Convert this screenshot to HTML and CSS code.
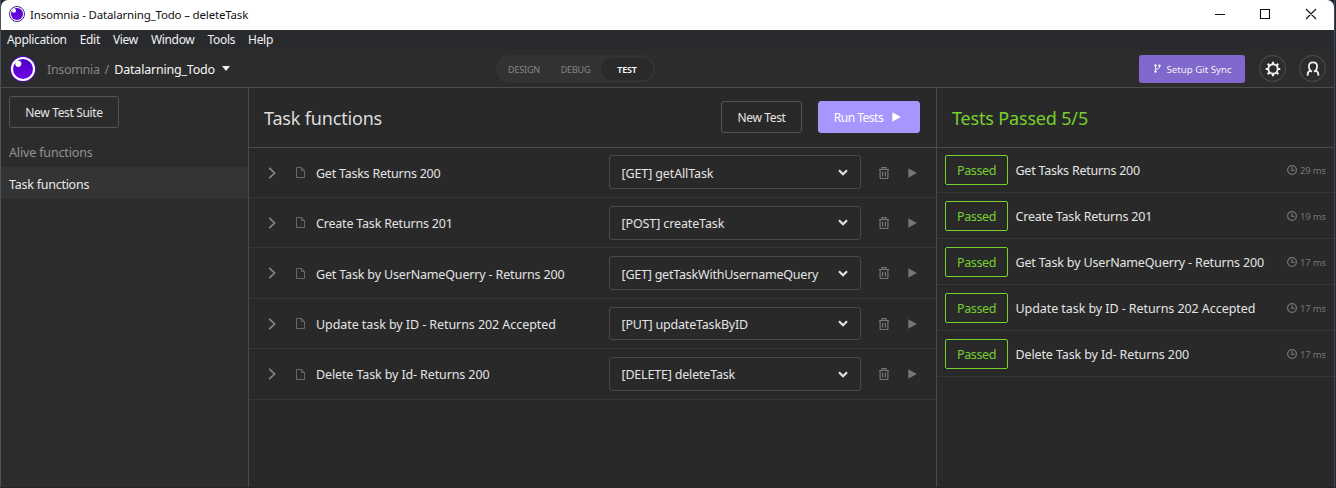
FILE: index.html
```html
<!DOCTYPE html>
<html lang="en">
<head>
<meta charset="utf-8">
<title>Insomnia - Datalarning_Todo – deleteTask</title>
<link rel="stylesheet" href="styles.css">
</head>
<body>
<svg class="defs" width="0" height="0">
  <defs>
    <linearGradient id="orb" x1="0" y1="0" x2="0" y2="1"><stop offset="0" stop-color="#4a00c0"/><stop offset="1" stop-color="#6f05e8"/></linearGradient>
    <symbol id="logo" viewBox="0 0 26 26"><circle cx="13" cy="13" r="13" fill="#5008c4"/><circle cx="13" cy="13" r="12.1" fill="#fff"/><circle cx="13" cy="13" r="10" fill="url(#orb)"/><circle cx="8.3" cy="7.8" r="3.1" fill="#fff"/></symbol>
    <symbol id="logo-small" viewBox="0 0 16 16"><circle cx="8" cy="8" r="7.5" fill="#fff" stroke="#44208f"/><circle cx="8" cy="8" r="6" fill="url(#orb)"/><circle cx="5" cy="4.8" r="2" fill="#fff"/></symbol>
    <symbol id="chev" viewBox="0 0 8 12"><path d="M1.2 .8 6.6 6 1.2 11.2" fill="none" stroke="currentColor" stroke-width="1.7"/></symbol>
    <symbol id="file" viewBox="0 0 9 11"><path d="M.5 .5H5.6L8.5 3.4V10.5H.5ZM5.5 .5V3.5H8.5" fill="none" stroke="currentColor"/></symbol>
    <symbol id="down" viewBox="0 0 10 7"><path d="M1 1.2 5 5.2 9 1.2" fill="none" stroke="currentColor" stroke-width="2.2"/></symbol>
    <symbol id="trash" viewBox="0 0 10 12"><path d="M0 2.5H10M3 2.5V.6H7V2.5M1.1 2.5V10.6Q1.1 11.5 2 11.5H8Q8.9 11.5 8.9 10.6V2.5M3.6 4.8V9.6M6.4 4.8V9.6" fill="none" stroke="currentColor" stroke-width="1.2"/></symbol>
    <symbol id="play" viewBox="0 0 9 10"><path d="M.3 .2V9.8L8.8 5Z" fill="currentColor"/></symbol>
    <symbol id="clock" viewBox="0 0 10 10"><circle cx="5" cy="5" r="4.4" fill="none" stroke="currentColor" stroke-width="1.2"/><path d="M5 2.2V5.3H7.6" fill="none" stroke="currentColor" stroke-width="1.2"/></symbol>
  </defs>
</svg>
<div class="window">
  <div class="titlebar">
    <svg class="app-icon"><use href="#logo-small"/></svg>
    <span class="title">Insomnia - Datalarning_Todo – deleteTask</span>
    <svg class="controls" viewBox="0 0 104 12"><path d="M0 6.5H10M45.5 1.5H54.5V10.5H45.5ZM91 1 101 11M101 1 91 11" fill="none" stroke="#111" stroke-width="1.1"/></svg>
  </div>
  <nav class="menubar"><span>Application</span><span>Edit</span><span>View</span><span>Window</span><span>Tools</span><span>Help</span></nav>
  <header class="header">
    <div class="crumbs">
      <svg class="logo"><use href="#logo"/></svg>
      <span class="org">Insomnia</span><span class="slash">/</span><span class="project">Datalarning_Todo</span>
      <svg class="caret" viewBox="0 0 8 5"><path d="M0 0H8L4 5Z" fill="#eee"/></svg>
    </div>
    <div class="tabs"><span class="tab design">DESIGN</span><span class="tab debug">DEBUG</span><span class="tab active">TEST</span></div>
    <div class="actions">
      <button class="sync"><svg class="branch" viewBox="0 0 7 9"><path d="M1.5 1V8M5.5 1V3Q5.5 5 1.5 5.4" fill="none" stroke="currentColor"/><circle cx="1.5" cy="1.4" r="1.2" fill="currentColor"/><circle cx="5.5" cy="1.6" r="1.2" fill="currentColor"/><circle cx="1.5" cy="7.6" r="1.2" fill="currentColor"/></svg><span>Setup Git Sync</span></button>
      <span class="round"><svg width="16" height="16" viewBox="0 0 16 16"><circle cx="8" cy="8" r="4.7" fill="none" stroke="#eee" stroke-width="1.9"/><path d="M8 .7V3M8 13V15.3M.7 8H3M13 8H15.3M2.7 2.7 4.4 4.4M11.6 11.6 13.3 13.3M2.7 13.3 4.4 11.6M11.6 4.4 13.3 2.7" stroke="#eee" stroke-width="2.1"/></svg></span>
      <span class="round"><svg width="14" height="16" viewBox="0 0 14 16"><path d="M1.7 14.8V13Q1.7 10.4 4.4 9.8Q2.9 8 2.9 5.3 2.9 1.3 7 1.3T11.1 5.3Q11.1 8 9.6 9.8Q12.3 10.4 12.3 13V14.8M4.2 9.6 6 10.6M9.8 9.6 8 10.6" fill="none" stroke="#eee" stroke-width="1.8"/></svg></span>
    </div>
  </header>
  <div class="body">
    <aside class="sidebar">
      <button class="btn suite"><span>New Test Suite</span></button>
      <div class="item"><span>Alive functions</span></div>
      <div class="item selected"><span>Task functions</span></div>
    </aside>
    <main class="main">
      <div class="pane-head"><h1 class="h-task">Task functions</h1><button class="btn new-test"><span>New Test</span></button><button class="btn run"><span>Run Tests</span><svg class="play"><use href="#play"/></svg></button></div>
      <div class="tests">
        <div class="test"><svg class="chev"><use href="#chev"/></svg><svg class="file"><use href="#file"/></svg><span class="name n1">Get Tasks Returns 200</span><div class="select first"><span class="s1">[GET] getAllTask</span><svg class="down"><use href="#down"/></svg></div><svg class="trash"><use href="#trash"/></svg><svg class="play"><use href="#play"/></svg></div>
        <div class="test"><svg class="chev"><use href="#chev"/></svg><svg class="file"><use href="#file"/></svg><span class="name n2">Create Task Returns 201</span><div class="select"><span class="s2">[POST] createTask</span><svg class="down"><use href="#down"/></svg></div><svg class="trash"><use href="#trash"/></svg><svg class="play"><use href="#play"/></svg></div>
        <div class="test"><svg class="chev"><use href="#chev"/></svg><svg class="file"><use href="#file"/></svg><span class="name n3">Get Task by UserNameQuerry - Returns 200</span><div class="select"><span class="s3">[GET] getTaskWithUsernameQuery</span><svg class="down"><use href="#down"/></svg></div><svg class="trash"><use href="#trash"/></svg><svg class="play"><use href="#play"/></svg></div>
        <div class="test"><svg class="chev"><use href="#chev"/></svg><svg class="file"><use href="#file"/></svg><span class="name n4">Update task by ID - Returns 202 Accepted</span><div class="select short"><span class="s4">[PUT] updateTaskByID</span><svg class="down"><use href="#down"/></svg></div><svg class="trash"><use href="#trash"/></svg><svg class="play"><use href="#play"/></svg></div>
        <div class="test last"><svg class="chev"><use href="#chev"/></svg><svg class="file"><use href="#file"/></svg><span class="name n5">Delete Task by Id- Returns 200</span><div class="select"><span class="s5">[DELETE] deleteTask</span><svg class="down"><use href="#down"/></svg></div><svg class="trash"><use href="#trash"/></svg><svg class="play"><use href="#play"/></svg></div>
      </div>
    </main>
    <section class="results">
      <div class="pane-head"><h1 class="h-pass">Tests Passed 5/5</h1></div>
      <div class="result"><span class="badge">Passed</span><span class="name n1">Get Tasks Returns 200</span><svg class="clock"><use href="#clock"/></svg><span class="ms">29 ms</span></div>
      <div class="result"><span class="badge">Passed</span><span class="name n2">Create Task Returns 201</span><svg class="clock"><use href="#clock"/></svg><span class="ms">19 ms</span></div>
      <div class="result"><span class="badge">Passed</span><span class="name n3">Get Task by UserNameQuerry - Returns 200</span><svg class="clock"><use href="#clock"/></svg><span class="ms">17 ms</span></div>
      <div class="result"><span class="badge">Passed</span><span class="name n4">Update task by ID - Returns 202 Accepted</span><svg class="clock"><use href="#clock"/></svg><span class="ms">17 ms</span></div>
      <div class="result"><span class="badge">Passed</span><span class="name n5">Delete Task by Id- Returns 200</span><svg class="clock"><use href="#clock"/></svg><span class="ms">17 ms</span></div>
    </section>
  </div>
</div>
</body>
</html>
```
FILE: styles.css
```css
* { box-sizing: border-box; }
body { margin: 0; height: 488px; overflow: hidden; background: #23272d; font: 12.5px "Noto Sans", "Open Sans", sans-serif; color: #e4e4e4; white-space: nowrap; }
svg { display: block; flex: none; }
.defs { position: absolute; }
button { font: inherit; color: inherit; margin: 0; }
.window { height: 487px; margin: 0 1px 0 0; border-left: 1px solid #47535f; border-right: 1px solid #3b4b5b; display: flex; flex-direction: column; }
.titlebar { height: 30px; flex: none; background: #fff; color: #111; display: flex; align-items: center; padding: 0 15px 0 8px; border-radius: 7px 7px 0 0; font-size: 11.5px; }
.app-icon { width: 16px; height: 16px; margin-right: 5px; margin-top: -2px; }
.title { letter-spacing: -.17px; margin-top: -1px; }
.controls { width: 104px; height: 12px; margin-left: auto; margin-top: -2px; }
.menubar { height: 20px; flex: none; background: #292a2e; display: flex; align-items: center; padding: 0 0 1px 6px; gap: 13px; font-size: 12px; color: #f1f1f1; letter-spacing: -.32px; }
.header { height: 38px; flex: none; background: #2c2c2c; border-bottom: 1px solid #4b4b4b; display: flex; align-items: center; padding: 0 8px; }
.crumbs { display: flex; align-items: center; width: 487px; }
.crumbs span { margin-top: 1px; }
.logo { width: 26px; height: 26px; margin: 0 11px 0 1px; }
.org, .slash { color: #858585; }
.org { letter-spacing: -.32px; }
.crumbs .slash { margin: 1px 5px 0; }
.project { color: #f5f5f5; letter-spacing: -.2px; }
.caret { width: 8px; height: 5px; margin-left: 7px; }
.tabs { width: 159px; height: 28px; border-radius: 14px; background: #333; display: flex; align-items: center; font-size: 9px; color: #858585; }
.tab { text-align: center; letter-spacing: -.2px; padding-top: 1px; }
.design { width: 56px; }
.debug { width: 47px; }
.active { width: 52px; margin-left: 2px; height: 22px; line-height: 22px; border-radius: 11px; background: #2a2a2a; color: #fff; font-weight: 600; }
.actions { margin-left: auto; display: flex; gap: 13px; align-items: center; }
.sync { width: 106px; height: 28px; padding: 0; border: 0; border-radius: 3px; background: #8068cc; color: #f2f2f2; font-size: 9.7px; display: flex; align-items: center; justify-content: center; margin-right: 1px; }
.sync span { padding-top: 1px; }
.branch { width: 7px; height: 9px; margin: 0 5px 0 2px; }
.round { width: 27px; height: 27px; border: 1px solid #505050; border-radius: 50%; display: flex; align-items: center; justify-content: center; }
.body { flex: 1; display: grid; grid-template-columns: 248px 688px 1fr; background: #292929; }
.sidebar { background: #2c2c2c; border-right: 1px solid #4b4b4b; padding-top: 8px; }
.btn { height: 32px; padding: 0; border: 1px solid #545454; border-radius: 3px; background: transparent; display: flex; align-items: center; justify-content: center; font-size: 12px; }
.btn span { padding-top: 1px; letter-spacing: -.35px; }
.suite { width: 110px; margin: 0 0 7px 8px; }
.item { height: 32px; padding-left: 8px; line-height: 36px; color: #929292; letter-spacing: -.15px; }
.item.selected { background: #343434; color: #e9e9e9; letter-spacing: -.25px; }
.main { border-right: 1px solid #4b4b4b; }
.pane-head { height: 60px; border-bottom: 1px solid #4b4b4b; display: flex; align-items: center; padding: 0 16px 2px 15px; }
h1 { margin: 2px 0 0; font-size: 18px; font-weight: 400; letter-spacing: -.17px; }
.h-task { margin-right: auto; color: #ddd; }
.h-pass { color: #76d02e; }
.new-test { width: 81px; margin-right: 16px; }
.run { width: 102px; background: #a896ff; border-color: #a896ff; color: #fff; padding-right: 3px; }
.run span { letter-spacing: -.5px; }
.run .play { width: 9px; height: 10px; margin-left: 9px; }
.tests { display: grid; grid-template-rows: 50px 50px 51px 50px 51px; }
.test { display: flex; align-items: center; padding-left: 19px; border-bottom: 1px solid #363636; }
.chev { width: 8px; height: 12px; color: #858585; }
.file { width: 9px; height: 11px; margin: 0 11px 0 20px; color: #686868; }
.name { flex: 1; }
.n1 { letter-spacing: -.24px; }
.n2 { letter-spacing: -.2px; }
.n3 { letter-spacing: -.16px; }
.n4 { letter-spacing: -.07px; }
.n5 { letter-spacing: -.12px; }
.test .name { padding-top: 2px; }
.test.last .name { padding-top: 0; }
.select { width: 252px; height: 34px; border: 1px solid #484848; border-radius: 3px; display: flex; align-items: center; justify-content: space-between; padding: 2px 12px 0 11.5px; }
.select.first { margin-bottom: 1px; }
.select.first span { padding-top: 1px; }
.select.short { height: 33px; }
.s1, .s2 { letter-spacing: -.12px; }
.s3 { letter-spacing: -.22px; }
.s4, .s5 { letter-spacing: -.19px; }
.last .select span { margin-top: -2px; }
.down { width: 10px; height: 7px; margin-top: -2px; }
.trash { width: 10px; height: 12px; margin: 0 19px 0 18px; color: #767676; }
.test > .play { width: 9px; height: 10px; margin-right: 19px; color: #767676; }
.result { height: 46px; border-bottom: 1px solid #363636; display: flex; align-items: center; padding: 0 8px; }
.pane-head + .result { height: 45px; }
.result .name { padding-top: 1px; }
.badge { width: 63px; height: 30px; line-height: 29.5px; border: 1px solid #76d02e; border-radius: 2px; color: #76d02e; text-align: center; margin-right: 7.5px; letter-spacing: -.4px; }
.clock { width: 10px; height: 10px; margin-right: 3px; color: #757575; }
.ms { font-size: 9.5px; color: #757575; letter-spacing: -.15px; padding-top: 1px; }
```
